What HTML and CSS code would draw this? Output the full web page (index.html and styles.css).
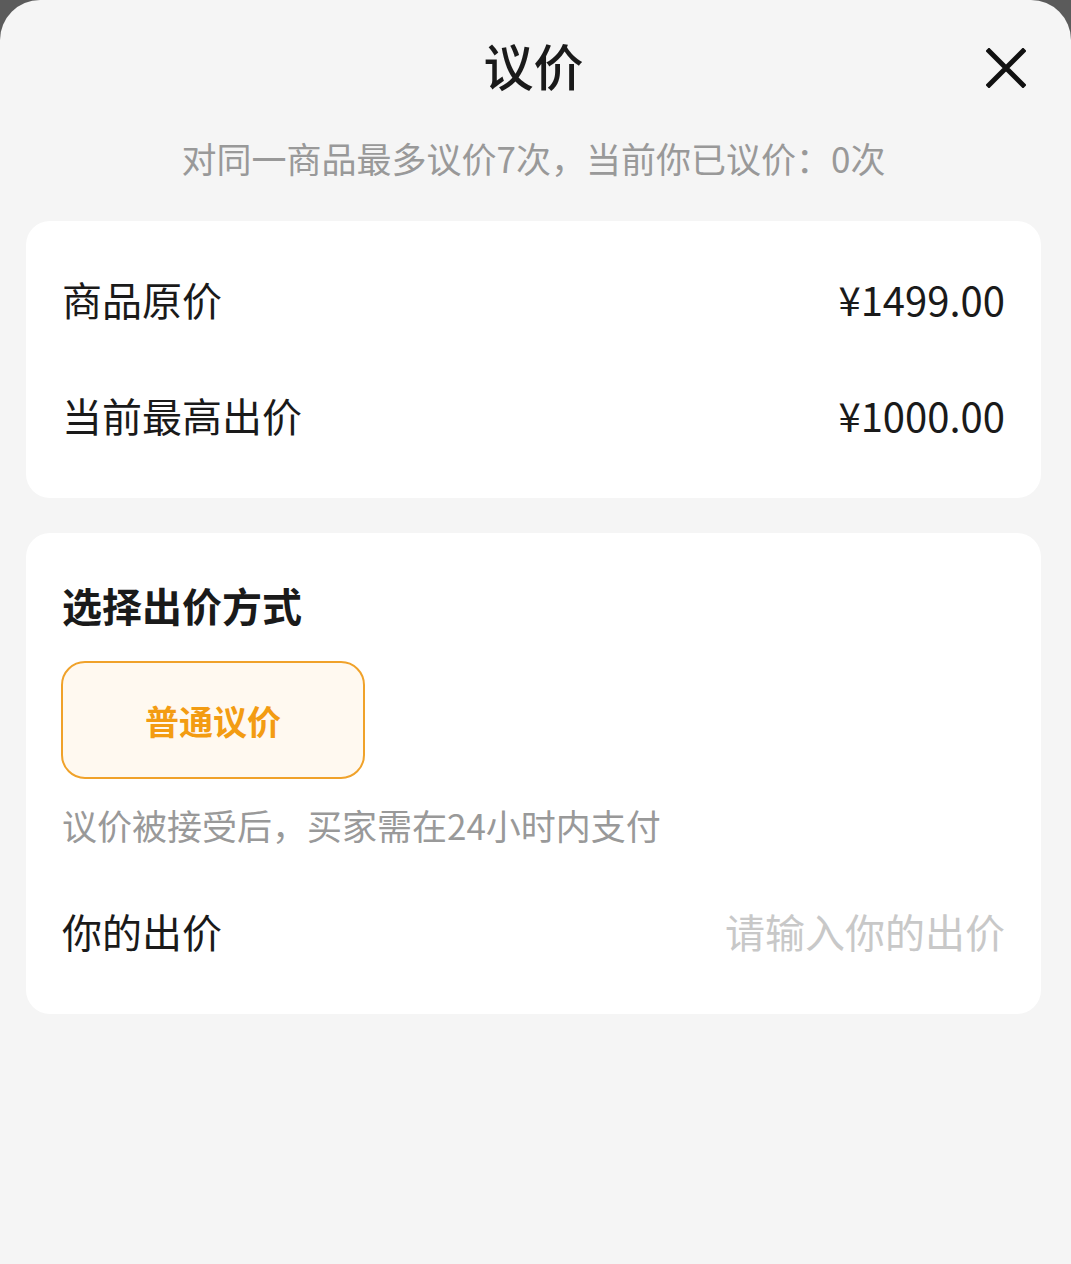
FILE: index.html
```html
<!DOCTYPE html>
<html lang="zh-CN">
<head>
  <meta charset="UTF-8">
  <meta name="viewport" content="width=device-width, initial-scale=1.0">
  <title>议价</title>
  <link rel="stylesheet" href="styles.css">
</head>
<body>
  <div class="sheet">
    <div class="header">
      <span></span>
      <h1 class="title">议价</h1>
      <button class="close" type="button" aria-label="关闭">
        <svg width="40" height="40" viewBox="0 0 40 40">
          <path d="M3 3 L37 37 M37 3 L3 37" stroke="#111" stroke-width="5" stroke-linecap="square" fill="none"/>
        </svg>
      </button>
    </div>

    <p class="subtitle">对同一商品最多议价7次，当前你已议价：0次</p>

    <div class="card card-prices">
      <div class="row">
        <span class="label">商品原价</span>
        <span class="value">¥1499.00</span>
      </div>
      <div class="row">
        <span class="label">当前最高出价</span>
        <span class="value">¥1000.00</span>
      </div>
    </div>

    <div class="card card-offer">
      <h2 class="section-title">选择出价方式</h2>
      <button class="mode active" type="button">普通议价</button>
      <p class="hint">议价被接受后，买家需在24小时内支付</p>
      <div class="row">
        <label class="label" for="offer">你的出价</label>
        <input class="offer-input" id="offer" type="text" placeholder="请输入你的出价">
      </div>
    </div>
  </div>
</body>
</html>
```

FILE: styles.css
```css
* {
  box-sizing: border-box;
}
body {
  margin: 0;
  background: #5b5b5b;
  font-family: "Noto Sans CJK SC", "Noto Sans", sans-serif;
  color: #1a1a1a;
}
.sheet {
  min-height: 1264px;
  background: #f5f5f5;
  border-radius: 40px 40px 0 0;
  padding: 0 30px 0 26px;
}
.header {
  display: grid;
  grid-template-columns: 1fr auto 1fr;
  align-items: center;
  height: 136px;
}
.title {
  margin: -8px 0 0;
  font-size: 50px;
  font-weight: 500;
  line-height: 1;
}
.close {
  justify-self: end;
  width: 40px;
  height: 40px;
  margin-right: 15px;
  padding: 0;
  border: none;
  background: none;
  display: flex;
}
.subtitle {
  margin: -2px 0 39px;
  text-align: center;
  font-size: 35px;
  line-height: 48px;
  color: #999;
}
.card {
  background: #fff;
  border-radius: 24px;
  padding: 0 36px;
}
.card-prices {
  padding-top: 20px;
  padding-bottom: 25px;
  margin-bottom: 35px;
}
.row {
  display: flex;
  align-items: center;
  justify-content: space-between;
  height: 116px;
}
.label {
  font-size: 40px;
}
.value {
  font-size: 40px;
}
.card-offer {
  padding-top: 44px;
  padding-bottom: 25px;
}
.section-title {
  margin: 0 0 28px;
  font-size: 40px;
  font-weight: 700;
  line-height: 56px;
}
.mode {
  display: block;
  width: 304px;
  height: 118px;
  margin-left: -1px;
  border: 2px solid #f0a22a;
  border-radius: 24px;
  background: #fff9f0;
  color: #f39c12;
  font-family: inherit;
  font-size: 34px;
  font-weight: 700;
}
.hint {
  margin: 22px 0 24px;
  font-size: 35px;
  line-height: 48px;
  color: #999;
}
.offer-input {
  width: 420px;
  border: none;
  outline: none;
  padding: 0;
  text-align: right;
  font-family: inherit;
  font-size: 40px;
  color: #1a1a1a;
  background: transparent;
}
.offer-input::placeholder {
  color: #c8c8c8;
}
```
